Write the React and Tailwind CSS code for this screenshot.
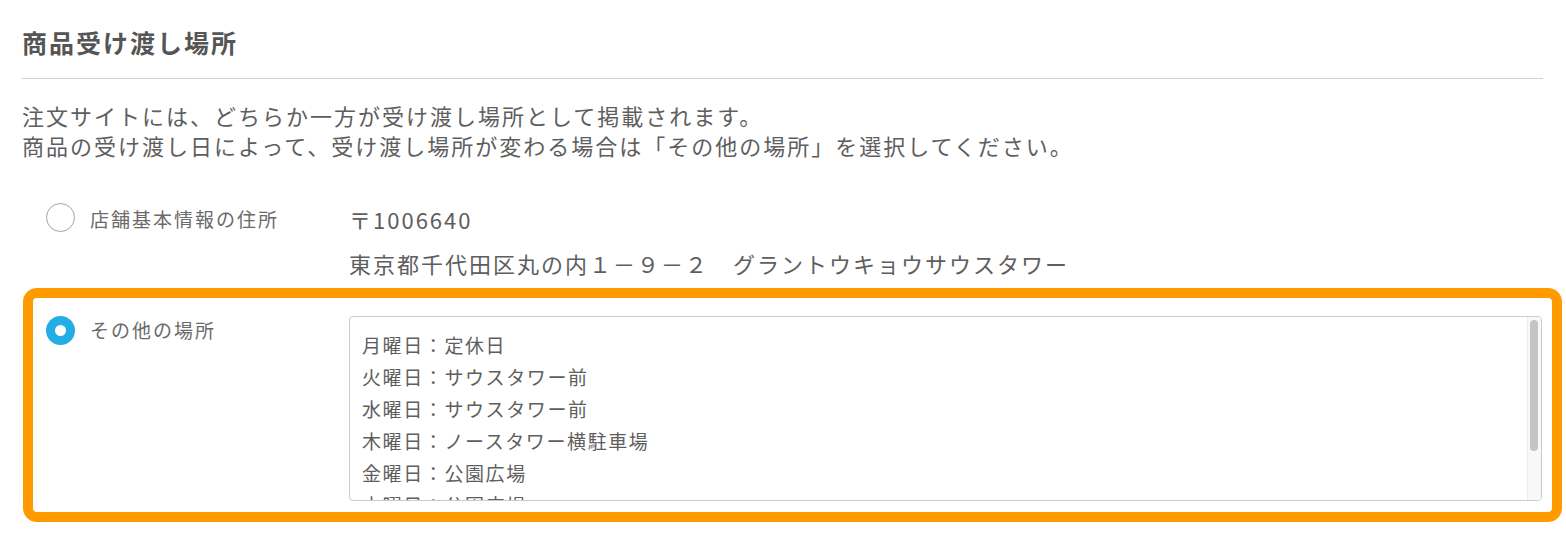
import React from 'react';

// 曜日ごとの受け渡し場所
const schedule = [
    '月曜日：定休日',
    '火曜日：サウスタワー前',
    '水曜日：サウスタワー前',
    '木曜日：ノースタワー横駐車場',
    '金曜日：公園広場',
    '土曜日：公園広場',
    '日曜日：定休日',
];

const Radio = ({ checked }) =>
    checked ? (
        <span className="flex h-[29px] w-[29px] shrink-0 items-center justify-center rounded-full bg-[#22ade4]">
            <span className="h-[11px] w-[11px] rounded-full bg-white"></span>
        </span>
    ) : (
        <span className="h-[29px] w-[29px] shrink-0 rounded-full border border-[#a3a3a3] bg-white"></span>
    );

const App = () => {
    return (
        <div
            className="min-h-screen bg-white pt-[24px] text-[#5c5c5c]"
            style={{ fontFamily: '"Noto Sans CJK JP", "Noto Sans", sans-serif' }}
        >
            {/* 見出し */}
            <div className="w-[1566px] pl-[22px] pr-[23px]">
                <h2 className="text-[25px] font-bold leading-[36px] tracking-[2px] text-[#555]">
                    商品受け渡し場所
                </h2>
                <div className="mt-[18px] h-px bg-[#d0d0d0]"></div>
                <div className="mt-[21px] text-[22px] leading-[30px] tracking-[2px] text-[#5e5e5e]">
                    <p>注文サイトには、どちらか一方が受け渡し場所として掲載されます。</p>
                    <p>商品の受け渡し日によって、受け渡し場所が変わる場合は「その他の場所」を選択してください。</p>
                </div>
            </div>

            {/* 選択肢 */}
            <div className="ml-[23px] mt-[15px] w-[1539px]">
                <div className="flex rounded-[14px] border-[10px] border-transparent pl-[13px] pr-[10px] pt-[18px]">
                    <div className="flex w-[303px] shrink-0 items-start gap-[15px]">
                        <Radio checked={false} />
                        <span className="mt-[1px] text-[19px] leading-[30px] tracking-[2px] text-[#6a6a6a]">
                            店舗基本情報の住所
                        </span>
                    </div>
                    <div className="text-[22px] tracking-[2px] text-[#5e5e5e]">
                        <div className="mt-[1px] leading-[30px]">〒1006640</div>
                        <div className="mt-[14px] leading-[30px]">
                            東京都千代田区丸の内１－９－２　グラントウキョウサウスタワー
                        </div>
                    </div>
                </div>

                <div className="flex rounded-[14px] border-[10px] border-[#ff9a00] pb-[11px] pl-[13px] pr-[10px] pt-[18px]">
                    <div className="flex w-[303px] shrink-0 items-start gap-[15px]">
                        <Radio checked={true} />
                        <span className="mt-[-1px] text-[19px] leading-[30px] tracking-[2px] text-[#6a6a6a]">
                            その他の場所
                        </span>
                    </div>
                    <div className="flex h-[185px] flex-1 overflow-hidden rounded-[4px] border border-[#cccccc] bg-white">
                        <div className="flex-1 overflow-hidden pl-[12px] pt-[12px] text-[19px] leading-[32px] tracking-[1.6px] text-[#5e5e5e]">
                            {schedule.map((line) => (
                                <div key={line}>{line}</div>
                            ))}
                        </div>
                        <div className="w-[14px] shrink-0 border-l border-[#ececec] bg-[#f8f8f8] pl-[2px] pt-[3px]">
                            <div className="h-[131px] w-[8px] rounded-full bg-[#c4c4c4]"></div>
                        </div>
                    </div>
                </div>
            </div>
        </div>
    );
};

export default App;
